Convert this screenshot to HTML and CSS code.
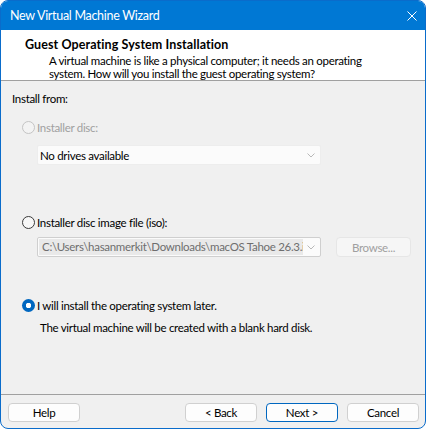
FILE: index.html
```html
<!DOCTYPE html>
<html>
<head>
<meta charset="utf-8">
<link rel="stylesheet" href="styles.css">
</head>
<body>
<div class="window">
  <div class="titlebar">
    <span class="title">New Virtual Machine Wizard</span>
    <svg class="close" width="10" height="10" viewBox="0 0 10 10"><path d="M0.5 0.5 L9.5 9.5 M9.5 0.5 L0.5 9.5" stroke="#fff" stroke-width="1" fill="none"/></svg>
  </div>
  <div class="header">
    <div class="h-title">Guest Operating System Installation</div>
    <div class="h-desc">A virtual machine is like a physical computer; it needs an operating<br>system. How will you install the guest operating system?</div>
  </div>
  <div class="content">
    <div class="label">Install from:</div>
    <div class="radio-row disabled r1"><span class="radio"></span><span>Installer disc:</span></div>
    <div class="combo c1"><span class="combo-text">No drives available</span><svg class="chev" width="8" height="5" viewBox="0 0 8 5"><path d="M0.5 0.5 L4 4 L7.5 0.5" stroke="#b8b8b8" fill="none"/></svg></div>
    <div class="radio-row r2"><span class="radio"></span><span>Installer disc image file (iso):</span></div>
    <div class="path-row">
      <div class="combo path"><span class="path-text">C:\Users\hasanmerkit\Downloads\macOS Tahoe 26.3.iso</span><svg class="chev" width="8" height="5" viewBox="0 0 8 5"><path d="M0.5 0.5 L4 4 L7.5 0.5" stroke="#b8b8b8" fill="none"/></svg></div>
      <div class="btn browse">Browse...</div>
    </div>
    <div class="radio-row r3"><span class="radio checked"></span><span>I will install the operating system later.</span></div>
    <div class="note">The virtual machine will be created with a blank hard disk.</div>
  </div>
  <div class="footer">
    <div class="btn">Help</div>
    <div class="spacer"></div>
    <div class="btn">&lt; Back</div>
    <div class="btn default">Next &gt;</div>
    <div class="btn">Cancel</div>
  </div>
</div>
</body>
</html>
```
FILE: styles.css
```css
* { box-sizing: border-box; }
html, body { margin: 0; padding: 0; background: #fff; }
body {
  font-family: Lato, "Noto Sans", sans-serif;
  font-size: 11.5px;
  letter-spacing: -0.3px;
  color: #000;
}
.window {
  width: 426px;
  height: 429px;
  border: 1px solid #0a6ccb;
  border-radius: 8px;
  overflow: hidden;
  display: flex;
  flex-direction: column;
  background: #f0f0f0;
}
.titlebar {
  height: 29px;
  background: #0078d4;
  color: #fff;
  display: flex;
  align-items: center;
  padding-left: 9px;
  padding-right: 8px;
  justify-content: space-between;
}
.title { font-size: 12.5px; line-height: 15px; letter-spacing: -0.3px; }
.header {
  height: 51px;
  flex: none;
  background: #fff;
  border-bottom: 1px solid #a0a0a0;
  padding: 7px 10px 0 24px;
  white-space: nowrap;
}
.h-title { font-weight: bold; font-size: 12.5px; letter-spacing: 0.1px; line-height: 15px; }
.h-desc { padding-left: 24px; line-height: 13px; margin-top: 2px; }
.content {
  flex: 1;
  padding: 10px 0 0 11px;
}
.label { line-height: 15px; }
.radio-row {
  display: flex;
  align-items: center;
  height: 15px;
  line-height: 15px;
  margin-left: 10px;
}
.radio {
  width: 13px;
  height: 13px;
  border-radius: 50%;
  border: 1px solid #3a3a3a;
  background: #f7f7f7;
  margin-right: 2px;
  flex: none;
}
.disabled { color: #a0a0a0; }
.disabled .radio { border-color: #c4c4c4; background: #f3f3f3; }
.radio.checked {
  border: none;
  background: radial-gradient(circle, #fff 0 2.5px, #0067c0 3px);
}
.r1 { margin-top: 14px; }
.r2 { margin-top: 50px; }
.r3 { margin-top: 41px; }
.combo {
  margin-left: 25px;
  width: 284px;
  height: 20px;
  background: #fbfbfb;
  border: 1px solid #e6e6e6;
  border-radius: 2px;
  display: flex;
  align-items: center;
  justify-content: space-between;
  padding: 0 4px 0 2px;
}
.c1 { margin-top: 10px; border-color: #ededed; }
.chev { flex: none; margin-right: 1px; }
.path-row {
  display: flex;
  margin-top: 7px;
  align-items: center;
}
.path { border-color: #cfcfcf; padding-left: 1px; }
.path-text {
  color: #6e6e6e;
  background: #e9e9e9;
  white-space: nowrap;
  overflow: hidden;
  width: 264px;
  padding-left: 3px;
  line-height: 16px;
}
.btn {
  width: 72px;
  height: 19px;
  border: 1px solid #d0d0d0;
  border-radius: 4px;
  background: #fdfdfd;
  display: flex;
  align-items: center;
  justify-content: center;
  line-height: 15px;
}
.browse {
  margin-left: 15px;
  width: 75px;
  height: 20px;
  color: #a0a0a0;
  background: #f6f6f6;
  border-color: #e6e6e6;
}
.note { margin-left: 28px; margin-top: 7px; line-height: 15px; }
.footer {
  height: 34px;
  border-top: 1px solid #a0a0a0;
  display: flex;
  padding: 8px 6px 0 7px;
  gap: 9px;
  align-items: flex-start;
}
.spacer { flex: 1; }
.default { border-color: #0067c0; }
```
